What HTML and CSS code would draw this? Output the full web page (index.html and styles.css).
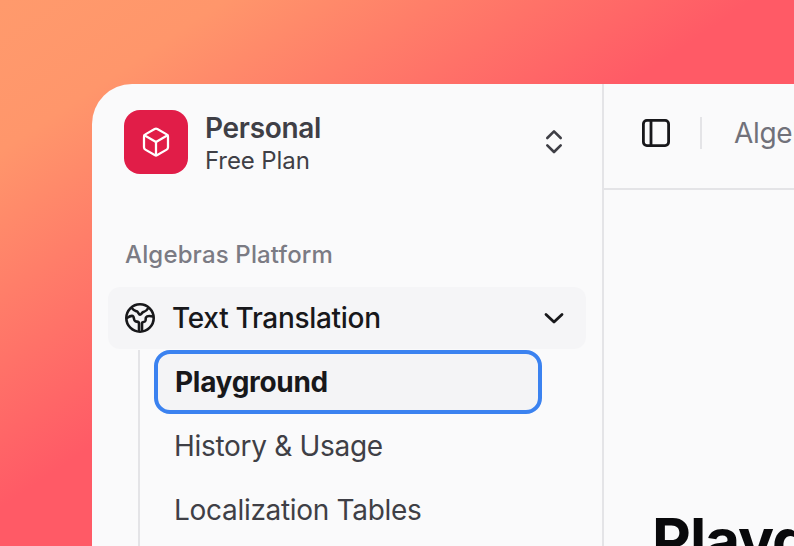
FILE: index.html
```html
<!DOCTYPE html>
<html lang="en">
<head>
    <meta charset="UTF-8">
    <title>Algebras Platform</title>
    <link rel="stylesheet" href="styles.css">
</head>
<body>
    <div class="window">
        <aside class="sidebar">
            <!-- WORKSPACE SWITCHER -->
            <div class="workspace">
                <div class="logo">
                    <svg width="32" height="32" viewBox="0 0 24 24" fill="none" stroke="#fff" stroke-width="1.7" stroke-linecap="round" stroke-linejoin="round">
                        <path d="M21 16V8a2 2 0 0 0-1-1.73l-7-4a2 2 0 0 0-2 0l-7 4A2 2 0 0 0 3 8v8a2 2 0 0 0 1 1.73l7 4a2 2 0 0 0 2 0l7-4A2 2 0 0 0 21 16z"/>
                        <path d="M3.3 7 12 12l8.700-5"/>
                        <path d="M12 22V12"/>
                    </svg>
                </div>
                <div class="workspace-text">
                    <div class="workspace-name">Personal</div>
                    <div class="workspace-plan">Free Plan</div>
                </div>
                <svg width="32" height="32" viewBox="0 0 32 32" fill="none" stroke="#3f3f46" stroke-width="2.600" stroke-linecap="round" stroke-linejoin="round">
                    <path d="M9.300 12 16 5.300l6.700 6.700"/>
                    <path d="M9.300 19.300 16 26l6.700-6.700"/>
                </svg>
            </div>

            <div class="section-label">Algebras Platform</div>

            <!-- NAV -->
            <div class="nav-parent">
                <svg width="32" height="32" viewBox="0 0 32 32" fill="none" stroke="#18181b" stroke-width="2.600" stroke-linecap="round" stroke-linejoin="round">
                    <circle cx="16" cy="16" r="13.700"/>
                    <path d="M7.700 6c2 2.500 3.500 2.800 5 3.300s2 3.400 3.300 3.400 2-2.300 3.300-2.700 3.500-1 5-4"/>
                    <path d="M3 16c2.500-1.700 5.500-2.500 6.300-1.500s.5 4.300 2 4.800 3.700.2 3.700 1.700v7"/>
                    <path d="M29 14.500c-2.500-.5-6.300-.4-7 .8s.2 3.500-1 4.200-3 .2-3 1.500v7"/>
                </svg>
                <span class="nav-parent-label">Text Translation</span>
                <svg width="32" height="32" viewBox="0 0 32 32" fill="none" stroke="#18181b" stroke-width="2.800" stroke-linecap="round" stroke-linejoin="round">
                    <path d="M8 12.500 16 20l8-7.500"/>
                </svg>
            </div>
            <nav class="subnav">
                <a class="subnav-item active">Playground</a>
                <a class="subnav-item">History &amp; Usage</a>
                <a class="subnav-item">Localization Tables</a>
            </nav>
        </aside>

        <main class="main">
            <header class="topbar">
                <svg class="topbar-icon" width="32" height="32" viewBox="0 0 32 32" fill="none" stroke="#18181b" stroke-width="2.800" stroke-linejoin="round">
                    <rect x="3.400" y="3.400" width="25.200" height="25.200" rx="3.500"/>
                    <path d="M11 3.400v25.200"/>
                </svg>
                <span class="topbar-divider"></span>
                <span class="crumb">Algebras Platform</span>
            </header>
            <h1>Playground</h1>
        </main>
    </div>
</body>
</html>
```

FILE: styles.css
```css
* {
    box-sizing: border-box;
    margin: 0;
    padding: 0;
}

body {
    width: 794px;
    height: 546px;
    overflow: hidden;
    padding: 84px 0 0 92px;
    font-family: 'Inter', sans-serif;
    letter-spacing: -0.3px;
    background: linear-gradient(146deg, #ff9a6c 0%, #ff966b 14%, #ff5a66 47%, #ff5a66 100%);
}

.window {
    display: flex;
    width: 702px;
    height: 462px;
    overflow: hidden;
    background: #fafafb;
    border-top-left-radius: 40px;
}

.sidebar {
    display: flex;
    flex-direction: column;
    flex: 0 0 512px;
    padding: 26px 16px 0;
    border-right: 2px solid #e4e4e7;
}

.workspace {
    display: flex;
    align-items: center;
    padding: 0 16px;
    height: 64px;
}

.logo {
    display: flex;
    align-items: center;
    justify-content: center;
    width: 64px;
    height: 64px;
    border-radius: 16px;
    background: #e11d48;
}

.workspace-text {
    flex: 1;
    margin-left: 17px;
    padding-top: 3px;
    color: #3f3f46;
}

.workspace-name {
    font-size: 28px;
    line-height: 34px;
    font-weight: 600;
}

.workspace-plan {
    font-size: 24px;
    line-height: 32px;
    letter-spacing: -0.1px;
}

.section-label {
    margin: 65px 0 0 17px;
    font-size: 24px;
    line-height: 32px;
    font-weight: 500;
    letter-spacing: 0.15px;
    color: #7b7b84;
}

.nav-parent {
    display: flex;
    flex-shrink: 0;
    align-items: center;
    height: 62px;
    margin-top: 16px;
    padding: 0 16px;
    border-radius: 12px;
    background: #f5f5f7;
    color: #18181b;
}

.nav-parent-label {
    flex: 1;
    margin-left: 16px;
    font-size: 28px;
    font-weight: 500;
}

.subnav {
    flex: 1;
    margin: 1px 0 0 30px;
    padding-left: 14px;
    border-left: 2px solid #e4e4e7;
}

.subnav-item {
    display: flex;
    align-items: center;
    height: 64px;
    width: 388px;
    padding-left: 20px;
    font-size: 28px;
    color: #3f3f46;
}

.subnav-item.active {
    padding-left: 17px;
    border: 4px solid #3b82f0;
    border-radius: 16px;
    background: #f4f4f6;
    color: #18181b;
    font-weight: 700;
}

.main {
    flex: 1;
    min-width: 0;
    overflow: hidden;
}

.topbar {
    display: flex;
    align-items: center;
    height: 106px;
    padding: 0 0 6px 36px;
    border-bottom: 2px solid #e4e4e7;
}

.topbar-icon {
    flex-shrink: 0;
}

.topbar-divider {
    flex-shrink: 0;
    width: 2px;
    height: 32px;
    margin: 0 32px 0 28px;
    background: #e4e4e7;
}

.crumb {
    font-size: 28px;
    color: #71717a;
    white-space: nowrap;
}

h1 {
    margin: 314px 0 0 48px;
    font-size: 60px;
    line-height: 72px;
    font-weight: 700;
    letter-spacing: -1px;
    color: #09090b;
    white-space: nowrap;
}
```
